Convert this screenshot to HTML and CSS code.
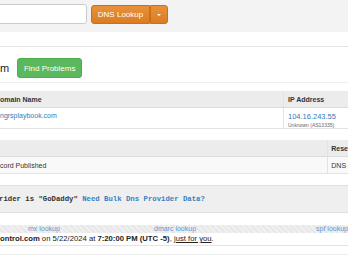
FILE: index.html
```html
<!DOCTYPE html>
<html lang="en">
<head>
  <meta charset="UTF-8" />
  <meta name="viewport" content="width=device-width, initial-scale=1.0" />
  <title>DNS Lookup</title>
  <link rel="stylesheet" href="styles.css">
</head>
<body>
  <div class="topbar">
    <input class="busca" type="text" value="">
    <div class="grupo">
      <button class="btnlookup">DNS Lookup</button>
      <button class="btncaret"><span class="caret"></span></button>
    </div>
  </div>

  <div class="linha"></div>

  <div class="titulo">
    <h2>m</h2>
    <button class="btnproblems">Find Problems</button>
  </div>

  <div class="linha fina"></div>

  <table class="tabela t1">
    <tr>
      <th>omain Name</th>
      <th class="col">IP Address</th>
    </tr>
    <tr>
      <td><a href="#">ngrsplaybook.com</a></td>
      <td class="col"><a href="#">104.16.243.55</a><br><span class="asn">Unknown (AS13335)</span></td>
    </tr>
  </table>

  <table class="tabela t2">
    <tr>
      <th></th>
      <th class="col2">Rese</th>
    </tr>
    <tr>
      <td>cord Published</td>
      <td class="col2">DNS</td>
    </tr>
  </table>

  <pre class="provedor">rider is "GoDaddy" <a href="#">Need Bulk Dns Provider Data?</a></pre>

  <div class="lookups">
    <a href="#" class="mx">mx lookup</a>
    <a href="#" class="dmarc">dmarc lookup</a>
    <a href="#" class="spf">spf lookup</a>
  </div>
  <div class="rodape">
    <b>ontrol.com</b> on 5/22/2024 at <b>7:20:00 PM (UTC -5)</b>, <u>just for you</u>.
  </div>
  <div class="linha baixo"></div>
</body>
</html>
```

FILE: styles.css
```css
body {
  font-family: 'Liberation Sans', Arial, sans-serif;
  font-size: 7px;
  color: #333;
  margin: 0;
  width: 348px;
  overflow: hidden;
  background-color: #fff;
}

a {
  color: #337ab7;
  text-decoration: none;
}

.topbar {
  background-color: #f3f3f3;
  height: 32px;
  display: flex;
  align-items: flex-start;
  padding-top: 4px;
  box-sizing: border-box;
}

.busca {
  margin-left: -12px;
  width: 99px;
  height: 20px;
  box-sizing: border-box;
  border: 1px solid #ccc;
  border-radius: 3px;
  background: #fff;
}

.grupo {
  display: flex;
  margin-left: 4px;
  margin-top: 1px;
}

.grupo button {
  height: 19px;
  border: 1px solid #c8701c;
  background: linear-gradient(#e8913a, #dc7c22);
  color: #fff;
  font-family: 'Liberation Sans', Arial, sans-serif;
  font-size: 8px;
  padding: 0;
}

.btnlookup {
  width: 59px;
  border-radius: 3px 0 0 3px;
}

.btncaret {
  width: 18px;
  border-left: 1px solid #c0691a;
  border-radius: 0 3px 3px 0;
  display: flex;
  align-items: center;
  justify-content: center;
}

.caret {
  width: 0;
  height: 0;
  border-left: 2px solid transparent;
  border-right: 2px solid transparent;
  border-top: 2px solid #fff;
}

.linha {
  border-top: 1px solid #e3e3e3;
  margin-top: 14px;
}

.linha.fina {
  margin-top: 4px;
  border-color: #eee;
}

.titulo {
  display: flex;
  align-items: center;
  margin-top: 11px;
}

.titulo h2 {
  margin: 0;
  font-size: 11px;
  font-weight: normal;
  color: #222;
}

.btnproblems {
  margin-left: 8px;
  width: 65px;
  height: 20px;
  border: 1px solid #4cae4c;
  border-radius: 3px;
  background-color: #5cb85c;
  color: #fff;
  font-family: 'Liberation Sans', Arial, sans-serif;
  font-size: 8px;
  padding: 0;
}

.tabela {
  width: 348px;
  border-collapse: collapse;
}

.tabela th {
  background-color: #ececec;
  text-align: left;
  font-weight: bold;
  height: 16px;
  padding: 0;
  border-bottom: 1px solid #dcdcdc;
  vertical-align: middle;
}

.tabela td {
  padding: 0;
  vertical-align: top;
  border-bottom: 1px solid #e3e3e3;
}

.t1 {
  margin-top: 8px;
}

.t1 td {
  height: 21px;
  padding-top: 4px;
  box-sizing: border-box;
}

.t1 .col {
  width: 60px;
  padding-left: 4px;
  border-left: 1px solid #e3e3e3;
}

.t1 td.col a {
  font-size: 7.5px;
}

.asn {
  font-size: 5px;
  color: #666;
}

.t2 {
  margin-top: 11px;
}

.t2 td {
  height: 16px;
  background-color: #f9f9f9;
  vertical-align: middle;
}

.t2 .col2 {
  width: 15px;
  padding-left: 3px;
  border-left: 1px solid #e3e3e3;
}

.provedor {
  margin: 11px 0 0 -1px;
  height: 28px;
  box-sizing: border-box;
  background-color: #efefef;
  border-top: 1px solid #e0e0e0;
  border-bottom: 1px solid #e0e0e0;
  font-family: 'Liberation Mono', 'Courier New', monospace;
  font-size: 7.3px;
  line-height: 26px;
  color: #333;
  font-weight: bold;
}

.provedor a {
  color: #3a7fc1;
}

.lookups {
  margin-top: 12px;
  height: 8px;
  position: relative;
  font-size: 7px;
  line-height: 8px;
  background: repeating-linear-gradient(45deg, #f0f0f0 0 2px, #e8e8e8 2px 4px);
}

.lookups a {
  color: #5b9bd5;
  position: absolute;
}

.mx { left: 28px; }
.dmarc { left: 154px; }
.spf { right: 0; }

.rodape {
  height: 12px;
  line-height: 12px;
  font-size: 7.7px;
  color: #222;
  border-bottom: 1px solid #e3e3e3;
}

.linha.baixo {
  margin-top: 8px;
  border-color: #ececec;
}
```
